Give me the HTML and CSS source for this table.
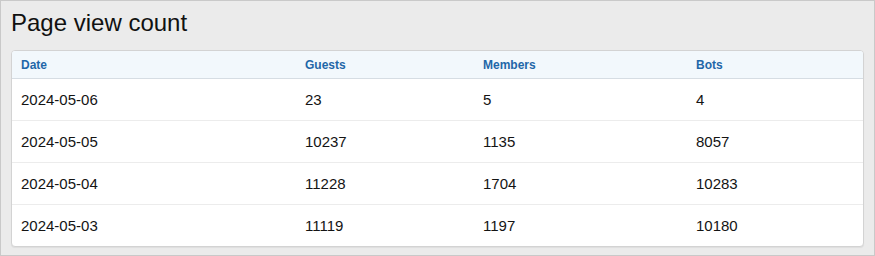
FILE: index.html
```html
<!DOCTYPE html>
<html>
<head>
<meta charset="utf-8">
<link rel="stylesheet" href="styles.css">
</head>
<body>
<div class="frame">
  <h1 class="title">Page view count</h1>
  <div class="card">
    <table class="stats">
      <colgroup>
        <col class="c-date"><col class="c-guests"><col class="c-members"><col class="c-bots">
      </colgroup>
      <thead>
        <tr><th>Date</th><th>Guests</th><th>Members</th><th>Bots</th></tr>
      </thead>
      <tbody>
        <tr><td>2024-05-06</td><td>23</td><td>5</td><td>4</td></tr>
        <tr><td>2024-05-05</td><td>10237</td><td>1135</td><td>8057</td></tr>
        <tr><td>2024-05-04</td><td>11228</td><td>1704</td><td>10283</td></tr>
        <tr><td>2024-05-03</td><td>11119</td><td>1197</td><td>10180</td></tr>
      </tbody>
    </table>
  </div>
</div>
</body>
</html>
```
FILE: styles.css
```css
html, body {
  margin: 0;
  padding: 0;
}
body {
  font-family: "Liberation Sans", Arial, sans-serif;
  color: #141414;
}
.frame {
  box-sizing: border-box;
  width: 875px;
  height: 256px;
  background: #ebebeb;
  border: 1px solid #c9c9c9;
  padding: 0 10px;
}
.title {
  margin: 0;
  padding: 8px 0 0 0;
  height: 49px;
  box-sizing: border-box;
  font-size: 24px;
  font-weight: normal;
  line-height: 28px;
  color: #111;
}
.card {
  background: #fff;
  border: 1px solid #d3d3d3;
  border-radius: 4px;
  overflow: hidden;
  box-shadow: 0 1px 1px rgba(0,0,0,0.06);
}
.stats {
  width: 100%;
  border-collapse: collapse;
  table-layout: fixed;
}
.c-date { width: 284px; }
.c-guests { width: 178px; }
.c-members { width: 213px; }
.stats th {
  text-align: left;
  background: #f2f8fc;
  color: #1f67a8;
  font-size: 12px;
  font-weight: bold;
  height: 27px;
  padding: 0 9px;
  border-bottom: 1px solid #d6dde3;
}
.stats td {
  text-align: left;
  font-size: 15px;
  height: 41px;
  padding: 0 9px;
  border-bottom: 1px solid #ececec;
}
.stats tbody tr:last-child td {
  border-bottom: none;
}
```
